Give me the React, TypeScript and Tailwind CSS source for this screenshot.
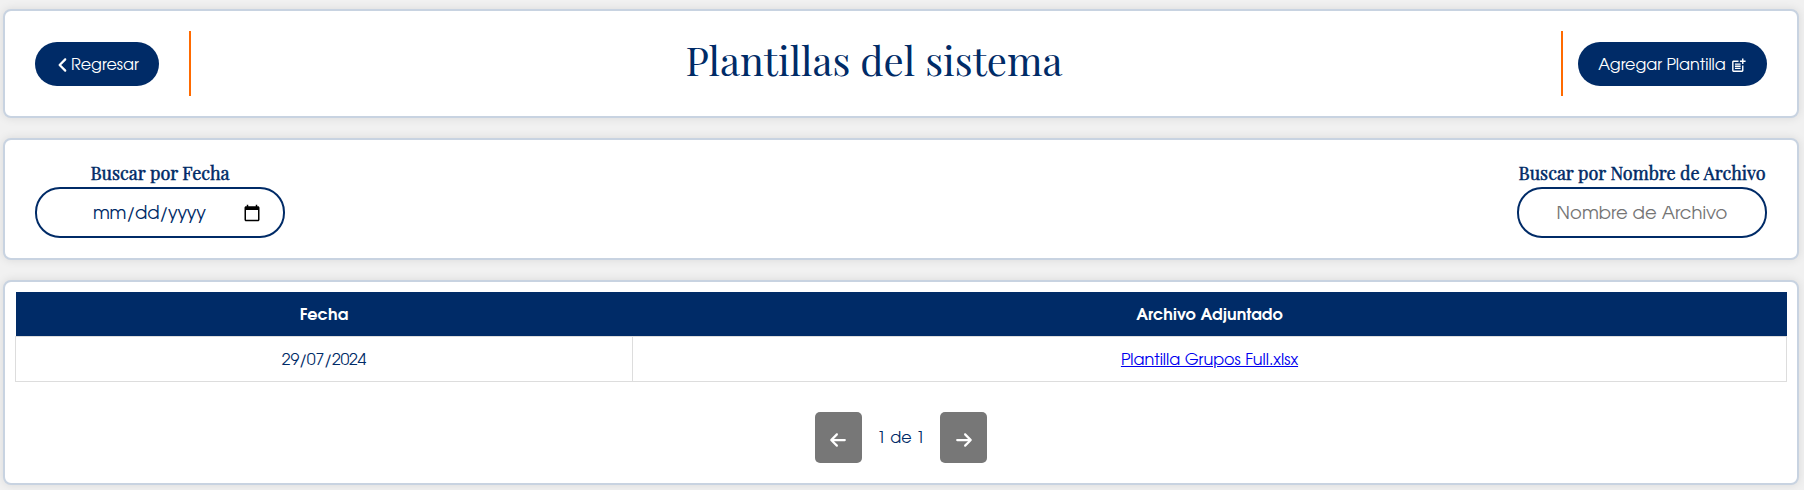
import type { ReactNode } from "react";
import { FaAngleLeft, FaArrowLeft, FaArrowRight } from "react-icons/fa6";
import { MdPostAdd } from "react-icons/md";

function Card({ className, children }: { className: string; children: ReactNode }) {
  return (
    <section className={`rounded-lg border-2 border-[#c8d3e1] bg-white shadow-[0_0_10px_rgba(0,0,0,0.1)] ${className}`}>
      {children}
    </section>
  );
}

const field =
  "flex h-[51px] w-[250px] items-center rounded-[25px] border-2 border-[#002b67] bg-white pt-0.5 text-lg leading-none whitespace-nowrap";
const label =
  "mb-[3px] font-['Playfair_Display','Liberation_Serif',serif] text-[18px] leading-[21px] font-normal whitespace-nowrap [-webkit-text-stroke:0.5px_#002b67]";
const pager = "flex h-[51px] w-[47px] items-center justify-center rounded-[5px] bg-[#777777] pt-[5px] text-white";

export default function App() {
  return (
    <main className="flex h-[490px] flex-col gap-5 bg-[#f1f1f1] pt-[9px] pr-[5px] pl-[3px] font-['TeX_Gyre_Adventor','Century_Gothic',Lato,sans-serif] text-base text-[#002b67]">
      <Card className="flex h-[109px] shrink-0 items-start px-[30px]">
        <button className="mt-[31px] flex h-11 w-[124px] items-center rounded-[22px] bg-[#002b67] pl-[18px] leading-none text-white">
          <FaAngleLeft size={18} className="mt-0.5 ml-px" />
          <span className="-ml-px pt-[3px]">Regresar</span>
        </button>
        <div className="mt-5 ml-[30px] h-[65px] w-0.5 bg-[#ff6a00]" />
        <h1 className="mt-[22px] flex-1 pr-1 text-center font-['Playfair_Display','Liberation_Serif',serif] text-[40px] leading-[53px] font-normal">
          Plantillas del sistema
        </h1>
        <div className="mt-5 mr-[15px] h-[65px] w-0.5 bg-[#ff6a00]" />
        <button className="mt-[31px] flex h-11 w-[189px] items-center justify-center gap-1 rounded-[22px] bg-[#002b67] leading-none whitespace-nowrap text-white">
          <span className="pt-[3px]">Agregar Plantilla</span>
          <MdPostAdd size={17} className="mt-0.5" />
        </button>
      </Card>

      <Card className="flex h-[122px] shrink-0 justify-between px-[30px] pt-[23px]">
        <div className="flex flex-col items-center">
          <span className={label}>Buscar por Fecha</span>
          <div className={`${field} justify-between pr-[22px] pl-[56px]`}>
            <span className="tracking-[-0.3px]">mm/dd/yyyy</span>
            <svg width="18" height="18" viewBox="0 0 24 24" fill="#000" className="mb-0.5">
              <path d="M20 3h-1V1h-2v2H7V1H5v2H4c-1.1 0-2 .9-2 2v16c0 1.1.9 2 2 2h16c1.1 0 2-.9 2-2V5c0-1.1-.9-2-2-2zm0 18H4V8h16v13z" />
            </svg>
          </div>
        </div>
        <div className="flex flex-col items-center">
          <span className={label}>Buscar por Nombre de Archivo</span>
          <input
            placeholder="Nombre de Archivo"
            className={`${field} text-center outline-none placeholder:text-[#757575]`}
          />
        </div>
      </Card>

      <Card className="h-[205px] shrink-0 px-[10px] pt-[10px]">
        <table className="w-full table-fixed border-collapse">
          <colgroup>
            <col className="w-[617px]" />
            <col />
          </colgroup>
          <thead>
            <tr className="h-11 bg-[#002b67] text-white">
              <th className="pt-[5px] pb-0 font-bold tracking-[0.1px]">Fecha</th>
              <th className="pt-[5px] pb-0 font-bold tracking-[0.1px]">Archivo Adjuntado</th>
            </tr>
          </thead>
          <tbody>
            <tr className="h-[45px] text-center">
              <td className="border border-[#dddddd] pt-[5px] pb-0 tracking-[-0.3px]">29/07/2024</td>
              <td className="border border-[#dddddd] pt-[5px] pb-0">
                <a href="#" className="text-[#0000ee] underline">Plantilla Grupos Full.xlsx</a>
              </td>
            </tr>
          </tbody>
        </table>
        <div className="mt-[30px] flex items-center justify-center">
          <button className={pager}><FaArrowLeft size={18} className="mr-px" /></button>
          <span className="w-[78px] pt-[3px] text-center">1 de 1</span>
          <button className={pager}><FaArrowRight size={18} /></button>
        </div>
      </Card>
    </main>
  );
}
